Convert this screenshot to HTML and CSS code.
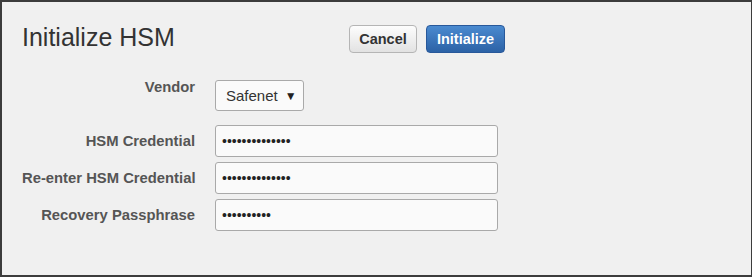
FILE: index.html
```html
<!DOCTYPE html>
<html lang="en">
<head>
    <meta charset="UTF-8">
    <title>Initialize HSM</title>
    <link rel="stylesheet" href="styles.css">
</head>
<body>
    <div class="dialog">
        <div class="dialog-header">
            <h2>Initialize HSM</h2>
            <div class="actions">
                <button class="btn btn-default">Cancel</button>
                <button class="btn btn-primary">Initialize</button>
            </div>
        </div>
        <form class="hsm-form">
            <label class="vendor-label" for="vendor">Vendor</label>
            <div class="vendor-field">
                <div class="select" id="vendor">Safenet <span class="caret">&#9660;</span></div>
            </div>
            <label for="cred">HSM Credential</label>
            <input type="password" id="cred" value="xxxxxxxxxxxxxx">
            <label for="cred2">Re-enter HSM Credential</label>
            <input type="password" id="cred2" value="xxxxxxxxxxxxxx">
            <label for="pass">Recovery Passphrase</label>
            <input type="password" id="pass" value="xxxxxxxxxx">
        </form>
    </div>
</body>
</html>
```

FILE: styles.css
```css
* {
    margin: 0;
    padding: 0;
    box-sizing: border-box;
    font-family: 'Liberation Sans', Arial, sans-serif;
}

body {
    width: 752px;
    height: 277px;
    background: #f0f0f0;
}

.dialog {
    width: 752px;
    height: 277px;
    border: 2px solid #3c3c3c;
    border-right-width: 1px;
    background: #f0f0f0;
    padding: 19px 20px 0 20px;
}

.dialog-header {
    display: flex;
    align-items: flex-start;
    height: 56px;
}

h2 {
    font-size: 25px;
    font-weight: normal;
    color: #333;
    width: 327px;
    line-height: 32px;
}

.actions {
    display: flex;
    gap: 9px;
    padding-top: 4px;
}

.btn {
    height: 28px;
    padding: 0 8px;
    font-size: 14.5px;
    font-weight: bold;
    border-radius: 4px;
    cursor: pointer;
}

.btn-default {
    color: #333;
    background: linear-gradient(#fdfdfd, #e2e2e2);
    border: 1px solid #b5b5b5;
    width: 68px;
}

.btn-primary {
    color: #fff;
    background: linear-gradient(#4a8ad0, #2c62a6);
    border: 1px solid #28589a;
    width: 79px;
}

.hsm-form {
    display: grid;
    grid-template-columns: 173px 283px;
    column-gap: 20px;
    row-gap: 5px;
    align-items: center;
}

.hsm-form label {
    text-align: right;
    font-size: 14.8px;
    font-weight: bold;
    color: #555;
    white-space: nowrap;
}

.hsm-form .vendor-label {
    align-self: start;
    padding-top: 2px;
}

.vendor-field {
    padding-top: 3px;
    padding-bottom: 9px;
}

.select {
    display: inline-flex;
    align-items: center;
    width: 89px;
    height: 31px;
    padding: 0 10px;
    border: 1px solid #a9a9a9;
    border-radius: 3px;
    background: #fafafa;
    font-size: 15px;
    color: #333;
}

.caret {
    font-size: 12px;
    margin-left: 7px;
    color: #222;
}

.hsm-form input {
    height: 32px;
    padding: 0 6px;
    border: 1px solid #a9a9a9;
    border-radius: 3px;
    background: #fafafa;
    font-size: 14px;
    color: #222;
}
```
